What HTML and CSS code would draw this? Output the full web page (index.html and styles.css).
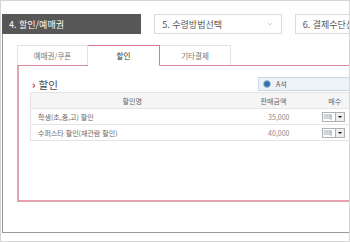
FILE: index.html
```html
<!DOCTYPE html>
<html lang="ko">
<head>
    <meta charset="UTF-8">
    <meta name="viewport" content="width=device-width, initial-scale=1.0">
    <title>할인/예매권</title>
    <link rel="stylesheet" href="styles.css">
</head>
<body>
    <div class="screen">
        <div class="frame">
            <ol class="steps">
                <li class="step step-on">4. 할인/예매권</li>
                <li class="step">5. 수령방법선택
                    <svg class="chev" width="6" height="4" viewBox="0 0 6 4"><path d="M0.5 0.5 L3 3 L5.5 0.5" fill="none" stroke="#c8c8c8" stroke-width="0.8"/></svg>
                </li>
                <li class="step">6. 결제수단선택</li>
            </ol>

            <ul class="tabs">
                <li class="tab">예매권/쿠폰</li>
                <li class="tab tab-on">할인</li>
                <li class="tab">기타결제</li>
            </ul>
            <div class="panel">
                <div class="panel-head">
                    <h3 class="title"><span class="arrow">›</span>할인</h3>
                    <label class="seat"><span class="radio"></span>A석</label>
                </div>
                <table class="dc">
                    <thead>
                        <tr>
                            <th class="c-name">할인명</th>
                            <th class="c-price">판매금액</th>
                            <th class="c-qty">매수</th>
                        </tr>
                    </thead>
                    <tbody>
                        <tr>
                            <td class="c-name">학생(초,중,고) 할인</td>
                            <td class="c-price">35,000</td>
                            <td class="c-qty"><span class="sel"><span class="sel-val">0매</span><span class="sel-btn"></span></span></td>
                        </tr>
                        <tr>
                            <td class="c-name">수퍼스타 할인(재관람 할인)</td>
                            <td class="c-price">40,000</td>
                            <td class="c-qty"><span class="sel"><span class="sel-val">0매</span><span class="sel-btn"></span></span></td>
                        </tr>
                    </tbody>
                </table>
            </div>
        </div>
    </div>
</body>
</html>
```

FILE: styles.css
```css
* {
    box-sizing: border-box;
}
body {
    margin: 0;
    font-family: "Noto Sans CJK KR", "Noto Sans", sans-serif;
    background: #fff;
}
.screen {
    width: 350px;
    height: 242px;
    border: 1px solid #d6d6d6;
    overflow: hidden;
    padding: 13px 0 0 1px;
}
.frame {
    width: 420px;
    height: 219px;
    border-left: 1px solid #9a9a9a;
    border-bottom: 1px solid #9a9a9a;
}
.steps {
    list-style: none;
    margin: 0;
    padding: 0;
    display: flex;
    gap: 13px;
    height: 20px;
}
.step {
    display: flex;
    align-items: center;
    width: 128px;
    padding-left: 7px;
    border: 1px solid #dcdcdc;
    font-size: 9px;
    color: #555;
    white-space: nowrap;
}
.step-on {
    width: 140px;
    margin-left: -1px;
    background: #575757;
    border-color: #575757;
    color: #fff;
    padding-left: 6px;
}
.chev {
    margin-left: auto;
    margin-right: 8px;
}
.tabs {
    list-style: none;
    margin: 11px 0 0 14px;
    padding: 0;
    display: flex;
    height: 20px;
}
.tab {
    width: 71px;
    display: flex;
    align-items: center;
    justify-content: center;
    border: 1px solid #e2e2e2;
    border-bottom: none;
    font-size: 7.5px;
    color: #777;
    background: #fff;
}
.tab + .tab {
    border-left: none;
}
.tab-on {
    width: 72px;
    height: 21px;
    margin-bottom: -1px;
    border: 1px solid #d9798e;
    border-bottom: 1px solid #fff;
    color: #333;
    position: relative;
    z-index: 1;
}
.panel {
    margin-left: 14px;
    width: 380px;
    height: 137px;
    border-top: 1px solid #d98a9b;
    border-left: 2px solid #e3a2b0;
    border-bottom: 2px solid #e3a2b0;
    padding: 10px 0 0 11px;
}
.panel-head {
    width: 321px;
    height: 16px;
    display: flex;
    align-items: center;
    justify-content: space-between;
}
.title {
    margin: 0;
    padding-left: 2px;
    font-size: 10.5px;
    font-weight: normal;
    color: #444;
    display: flex;
    align-items: center;
}
.arrow {
    color: #d4283e;
    font-weight: bold;
    font-size: 11px;
    margin-right: 3px;
}
.seat {
    width: 93px;
    height: 14px;
    background: #eef3f8;
    border: 1px solid #c9d7e6;
    display: flex;
    align-items: center;
    padding-left: 4px;
    font-size: 7px;
    color: #555;
}
.radio {
    width: 8px;
    height: 8px;
    border-radius: 50%;
    border: 1.5px solid #b6c2cc;
    background: #2f6fb5;
    margin-right: 5px;
}
.dc {
    width: 321px;
    border-collapse: collapse;
    border: 1px solid #e3e3e3;
    font-size: 7px;
    color: #666;
}
.dc th {
    height: 16px;
    background: #f5f5f5;
    font-weight: normal;
    text-align: center;
    padding: 0;
}
.dc td {
    height: 16px;
    border-top: 1px solid #e6e6e6;
    padding: 0;
}
.dc td.c-name {
    padding-left: 7px;
}
.c-name {
    width: 203px;
}
.c-price {
    width: 80px;
}
.dc td.c-price {
    text-align: right;
    padding-right: 24px;
    color: #888;
}
.dc td.c-qty {
    padding-left: 8px;
}
.dc th.c-qty {
    padding-left: 6px;
}
.sel {
    display: flex;
    width: 23px;
    height: 10px;
    border: 1px solid #b0b0b0;
}
.sel-val {
    flex: 1;
    font-size: 6px;
    color: #888;
    line-height: 8px;
    padding-left: 1px;
}
.sel-btn {
    width: 9px;
    border-left: 1px solid #b0b0b0;
    background: #eee;
    position: relative;
}
.sel-btn::after {
    content: "";
    position: absolute;
    left: 2px;
    top: 3px;
    border-left: 2px solid transparent;
    border-right: 2px solid transparent;
    border-top: 2px solid #111;
}
```
